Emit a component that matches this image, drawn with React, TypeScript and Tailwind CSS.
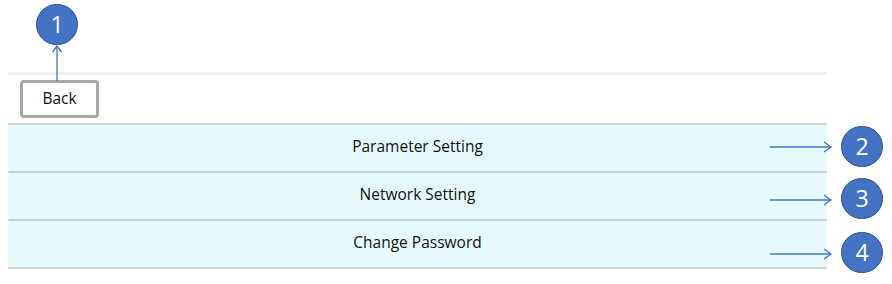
import React from 'react';

const Badge: React.FC<{ n: number }> = ({ n }) => (
  <div
    className="w-[42px] h-[41px] shrink-0 rounded-full bg-[#4472c4] border-[1.5px] border-[#2f528f] flex items-center justify-center text-white text-[23px] font-medium leading-none"
    style={{ fontFamily: '"Open Sans", "Noto Sans", sans-serif' }}
  >
    {n}
  </div>
);

const RightArrow: React.FC<{ className?: string }> = ({ className }) => (
  <svg className={'absolute ' + (className || '')} width="64" height="12" viewBox="0 0 64 12">
    <line x1="0" y1="6" x2="61" y2="6" stroke="#4472c4" strokeWidth="1.3" />
    <polyline points="54,1 61,6 54,11" fill="none" stroke="#4472c4" strokeWidth="1.3" />
  </svg>
);

const items = [
  { label: 'Parameter Setting', arrow: 'top-[16px]' },
  { label: 'Network Setting', arrow: 'top-[21px]' },
  { label: 'Change Password', arrow: 'top-[27px]' },
];

export default function App() {
  return (
    <div
      className="w-[892px] h-[284px] bg-white overflow-hidden flex"
      style={{ fontFamily: '"Open Sans", "Noto Sans", sans-serif' }}
    >
      {/* main panel */}
      <div className="ml-[8px] w-[819px] flex flex-col">
        {/* annotation 1 above the header */}
        <div className="relative h-[72px] pl-[28px] pt-[4px]">
          <Badge n={1} />
          <svg className="absolute left-[44px] top-[45px]" width="10" height="36" viewBox="0 0 10 36">
            <line x1="5" y1="1" x2="5" y2="36" stroke="#4472c4" strokeWidth="1.3" />
            <polyline points="0.5,7 5,1 9.5,7" fill="none" stroke="#4472c4" strokeWidth="1.3" />
          </svg>
        </div>

        <div className="h-[3px] bg-[#eef2f8]" />
        <div className="h-[48px] pl-[12px] pt-[5px]">
          <button className="w-[79px] h-[38px] rounded-[4px] border-[3px] border-[#a8a8a8] bg-white text-[15.5px] text-[#111] flex items-center justify-center pb-[1px]">
            Back
          </button>
        </div>
        <div className="h-[2px] bg-[#cfcfcf]" />

        {/* menu rows */}
        {items.map((it) => (
          <div key={it.label} className="relative">
            <div className="h-[46px] bg-[#e6f9fd] rounded-[3px] flex items-center justify-center pb-[3px] text-[15.5px] text-[#111]">
              {it.label}
            </div>
            <div className="h-[2px] bg-[#cfcfcf]" />
            <RightArrow className={'left-[762px] ' + it.arrow} />
          </div>
        ))}
      </div>

      {/* annotations 2-4 */}
      <div className="ml-[14px] pt-[126px] flex flex-col gap-[11px]">
        <Badge n={2} />
        <Badge n={3} />
        <div className="mt-[2px]">
          <Badge n={4} />
        </div>
      </div>
    </div>
  );
}
